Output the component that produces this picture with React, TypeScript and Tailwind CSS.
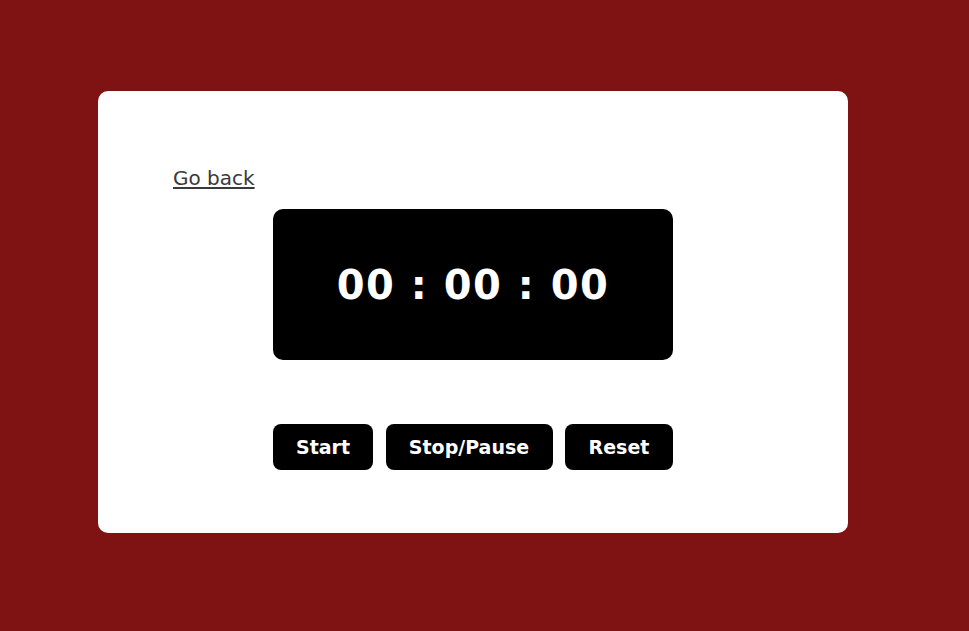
import React, { useEffect, useRef, useState } from 'react';

function pad(n: number) {
  return n.toString().padStart(2, '0');
}

export default function App() {
  const [seconds, setSeconds] = useState(0);
  const [running, setRunning] = useState(false);
  const timer = useRef<number | null>(null);

  useEffect(() => {
    if (!running) return;
    timer.current = window.setInterval(() => setSeconds((s) => s + 1), 1000);
    return () => {
      if (timer.current) window.clearInterval(timer.current);
    };
  }, [running]);

  const h = Math.floor(seconds / 3600);
  const m = Math.floor((seconds % 3600) / 60);
  const s = seconds % 60;

  const font = { fontFamily: '"DejaVu Sans", "Noto Sans", sans-serif' };

  return (
    <div className="min-h-screen w-full bg-[#7f1212] pt-[91px] pl-[98px]" style={font}>
      <div className="w-[750px] h-[442px] rounded-[10px] bg-white px-[75px] pt-[75px]">
        {/* Back link */}
        <a href="#" className="block w-fit text-[20px] leading-[24px] text-[#3a3a3a] underline underline-offset-2 font-normal">
          Go back
        </a>

        {/* Clock */}
        <div className="mx-auto mt-[19px] flex h-[151px] w-[400px] items-center justify-center rounded-[10px] bg-black">
          <span className="text-[40px] font-bold tracking-[1.5px] text-white">
            {pad(h)} : {pad(m)} : {pad(s)}
          </span>
        </div>

        {/* Controls */}
        <div className="mx-auto mt-[64px] flex w-[400px] justify-between">
          <button
            onClick={() => setRunning(true)}
            className="h-[46px] w-[100px] rounded-[8px] bg-black text-[19px] font-bold text-white"
          >
            Start
          </button>
          <button
            onClick={() => setRunning(false)}
            className="h-[46px] w-[167px] rounded-[8px] bg-black text-[19px] font-bold text-white"
          >
            Stop/Pause
          </button>
          <button
            onClick={() => {
              setRunning(false);
              setSeconds(0);
            }}
            className="h-[46px] w-[108px] rounded-[8px] bg-black text-[19px] font-bold text-white"
          >
            Reset
          </button>
        </div>
      </div>
    </div>
  );
}
